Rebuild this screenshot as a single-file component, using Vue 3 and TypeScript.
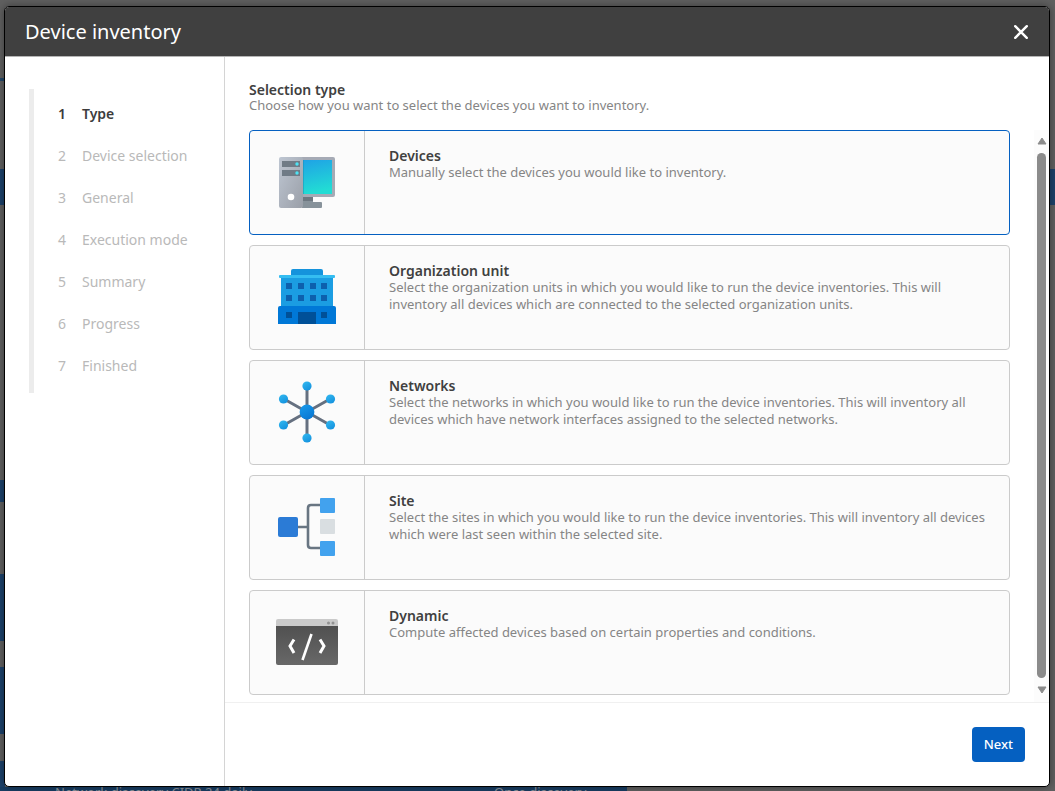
<script setup lang="ts">
import { ref } from 'vue'

interface SelectionType {
  id: string
  title: string
  text: string
}

const steps: string[] = ['Type', 'Device selection', 'General', 'Execution mode', 'Summary', 'Progress', 'Finished']
const current = ref(0)
const selected = ref('devices')

const types: SelectionType[] = [
  { id: 'devices', title: 'Devices', text: 'Manually select the devices you would like to inventory.' },
  {
    id: 'unit',
    title: 'Organization unit',
    text: 'Select the organization units in which you would like to run the device inventories. This will inventory all devices which are connected to the selected organization units.',
  },
  {
    id: 'networks',
    title: 'Networks',
    text: 'Select the networks in which you would like to run the device inventories. This will inventory all devices which have network interfaces assigned to the selected networks.',
  },
  {
    id: 'site',
    title: 'Site',
    text: 'Select the sites in which you would like to run the device inventories. This will inventory all devices which were last seen within the selected site.',
  },
  { id: 'dynamic', title: 'Dynamic', text: 'Compute affected devices based on certain properties and conditions.' },
]
</script>

<template>
  <div class="page">
    <div class="behind" aria-hidden="true">
      <div class="edge left"></div>
      <div class="edge right"></div>
      <div class="jobs">
        <span class="job first">Network discovery CIDR 24 daily</span>
        <span class="job">Once discovery</span>
      </div>
    </div>

    <section class="dialog" role="dialog" aria-labelledby="dialog-title">
      <header class="head">
        <h1 id="dialog-title">Device inventory</h1>
        <button class="close" type="button" aria-label="Close">
          <svg width="16" height="16" viewBox="0 0 16 16">
            <path d="M2.2 2.2 13.8 13.8M13.8 2.2 2.2 13.8" stroke="#fff" stroke-width="2.4" stroke-linecap="round" />
          </svg>
        </button>
      </header>

      <div class="body">
        <nav class="side" aria-label="Steps">
          <ol class="steps">
            <li v-for="(step, i) in steps" :key="step" :class="{ active: i === current }">
              <span class="num">{{ i + 1 }}</span>
              <span>{{ step }}</span>
            </li>
          </ol>
        </nav>

        <main class="main">
          <div class="intro">
            <h2>Selection type</h2>
            <p>Choose how you want to select the devices you want to inventory.</p>
          </div>

          <div class="scroller">
            <div class="cards" role="radiogroup" aria-label="Selection type">
              <label v-for="t in types" :key="t.id" class="card" :class="{ chosen: selected === t.id }">
                <input v-model="selected" class="radio" type="radio" name="selection-type" :value="t.id" />
                <span class="picture">
                  <svg v-if="t.id === 'devices'" width="64" height="64" viewBox="0 0 64 64">
                    <defs>
                      <linearGradient id="screen" x1="0" y1="0" x2="0.2" y2="1">
                        <stop offset="0" stop-color="#1fa2e6" />
                        <stop offset="1" stop-color="#22dcd4" />
                      </linearGradient>
                      <linearGradient id="tower" x1="0" y1="0" x2="1" y2="1">
                        <stop offset="0" stop-color="#bec6d2" />
                        <stop offset="1" stop-color="#9a9fa8" />
                      </linearGradient>
                    </defs>
                    <rect x="25" y="6" width="35" height="40" rx="2" fill="#a5aab5" />
                    <rect x="27" y="9" width="30" height="34" fill="url(#screen)" />
                    <path d="M27 46h11v5h8q1 0 1 1v4q0 1-1 1H27z" fill="#87929a" />
                    <path d="M27 46h11v4H27z" fill="#6d7780" />
                    <rect x="27" y="9" width="2" height="34" fill="#178eb0" opacity=".45" />
                    <rect x="4" y="6" width="24" height="51" rx="2" fill="url(#tower)" />
                    <rect x="7" y="10" width="18" height="6" fill="#707b86" />
                    <rect x="7" y="19" width="18" height="6" fill="#707b86" />
                    <circle cx="22" cy="13" r="1.7" fill="#4de3f4" />
                    <circle cx="22" cy="22" r="1.7" fill="#4de3f4" />
                    <circle cx="16" cy="46" r="3.3" fill="#fff" />
                  </svg>
                  <svg v-else-if="t.id === 'unit'" width="64" height="64" viewBox="0 0 64 64">
                    <path d="M16 10V5q0-2 2-2h28q2 0 2 2v5z" fill="#1593dc" />
                    <rect x="6" y="9" width="52" height="31" fill="#1b9de2" />
                    <rect x="4" y="9" width="56" height="3" rx="1" fill="#35bdf1" />
                    <path d="M3 58V42q0-2 2-2h54q2 0 2 2v16z" fill="#0078d7" />
                    <g fill="#0d60ad">
                      <path d="M11 17h6v6h-6zM23 17h6v6h-6zM35 17h6v6h-6zM46 17h6v6h-6z" />
                      <path d="M11 29h6v6h-6zM23 29h6v6h-6zM35 29h6v6h-6zM46 29h6v6h-6z" />
                    </g>
                    <path d="M11 46h6v6h-6zM23 46h18v12H23zM46 46h6v6h-6z" fill="#005098" />
                  </svg>
                  <svg v-else-if="t.id === 'networks'" width="64" height="64" viewBox="0 1 64 64">
                    <defs>
                      <linearGradient id="node" x1="0" y1="0" x2="0.6" y2="1">
                        <stop offset="0" stop-color="#34baf0" />
                        <stop offset="1" stop-color="#1593df" />
                      </linearGradient>
                      <linearGradient id="hub" x1="0" y1="0" x2="0.6" y2="1">
                        <stop offset="0" stop-color="#199cec" />
                        <stop offset="1" stop-color="#0878d4" />
                      </linearGradient>
                    </defs>
                    <path d="M32 6v52M9 19l46 26M55 19 9 45" stroke="#657080" stroke-width="3" />
                    <g fill="url(#node)">
                      <circle cx="32" cy="6" r="4.6" />
                      <circle cx="32" cy="58" r="4.6" />
                      <circle cx="8.5" cy="19" r="4.6" />
                      <circle cx="55.5" cy="19" r="4.6" />
                      <circle cx="8.5" cy="45" r="4.6" />
                      <circle cx="55.5" cy="45" r="4.6" />
                    </g>
                    <circle cx="32" cy="32" r="7.4" fill="url(#hub)" />
                  </svg>
                  <svg v-else-if="t.id === 'site'" width="64" height="64" viewBox="0 1 64 64">
                    <path d="M22 32h11M46 10H36q-3 0-3 3v37q0 3 3 3h10" fill="none" stroke="#687582" stroke-width="2.6" />
                    <rect x="3" y="22" width="20" height="20" rx="2" fill="#2b7bd6" />
                    <rect x="45" y="3" width="15" height="15" rx="1" fill="#42a2ee" />
                    <rect x="45" y="24" width="15" height="15" rx="1" fill="#d9dee1" />
                    <rect x="45" y="46" width="15" height="15" rx="1" fill="#42a2ee" />
                  </svg>
                  <svg v-else width="64" height="64" viewBox="0 2 64 64">
                    <defs>
                      <linearGradient id="window" x1="0" y1="0" x2="0" y2="1">
                        <stop offset="0" stop-color="#505050" />
                        <stop offset="1" stop-color="#686868" />
                      </linearGradient>
                    </defs>
                    <path d="M1 16h62v38q0 2-2 2H3q-2 0-2-2z" fill="url(#window)" />
                    <path d="M1 17v-5q0-2 2-2h58q2 0 2 2v5z" fill="#cacaca" />
                    <circle cx="53.5" cy="14" r="1.5" fill="#929292" />
                    <circle cx="58" cy="14" r="1.5" fill="#929292" />
                    <path d="M19 30.500 15 37l4 7M45 30.500 49 37l-4 7" fill="none" stroke="#fff" stroke-width="3" />
                    <path d="M36.500 25 27.500 51" stroke="#fff" stroke-width="2.600" />
                  </svg>
                </span>
                <span class="copy">
                  <span class="name">{{ t.title }}</span>
                  <span class="desc">{{ t.text }}</span>
                </span>
              </label>
            </div>
            <div class="scrollbar" aria-hidden="true">
              <svg width="10" height="8" viewBox="0 0 10 8"><path d="M5 1 9 7H1z" fill="#8b8b8b" stroke="#8b8b8b" stroke-linejoin="round" /></svg>
              <div class="thumb"></div>
              <svg width="10" height="8" viewBox="0 0 10 8"><path d="M5 7 9 1H1z" fill="#8b8b8b" stroke="#8b8b8b" stroke-linejoin="round" /></svg>
            </div>
          </div>

          <footer class="foot">
            <button class="next" type="button">Next</button>
          </footer>
        </main>
      </div>
    </section>
  </div>
</template>

<style>
body {
  margin: 0;
}
</style>

<style scoped>
* {
  box-sizing: border-box;
}
.page {
  position: relative;
  display: flex;
  min-height: 100vh;
  padding: 6px 5px 4px 4px;
  overflow: hidden;
  background: #606060;
  font-family: 'Noto Sans', sans-serif;
  font-size: 13px;
  line-height: 17px;
  color: #858585;
}
.behind {
  position: absolute;
  inset: 0;
}
.edge {
  position: absolute;
  top: 0;
  bottom: 0;
  width: 5px;
}
.left {
  left: 0;
  background: linear-gradient(
    transparent 78px, #23486b 78px 81px, transparent 81px 169px,
    #1d426b 169px 205px, transparent 205px 480px,
    #1d426b 480px 502px, transparent 502px 574px,
    #1d426b 574px 641px, transparent 641px 667px,
    #1d426b 667px 734px, transparent 734px 761px,
    #1d426b 761px
  );
}
.right {
  right: 0;
  background: linear-gradient(transparent 169px, #1d426b 169px 205px, transparent 205px);
}
.jobs {
  position: absolute;
  left: 0;
  bottom: 0;
  display: flex;
  width: 627px;
  height: 4px;
  overflow: hidden;
  background: #183e64;
  color: #8d949c;
  line-height: 10px;
  white-space: nowrap;
}
.job {
  flex: none;
}
.first {
  width: 494px;
  padding-left: 55px;
}
.dialog {
  position: relative;
  display: flex;
  flex: 1;
  flex-direction: column;
  overflow: hidden;
  border: 1px solid #000;
  border-radius: 5px;
  background: #fff;
  box-shadow: 0 0 8px rgba(0, 0, 0, 0.4);
}
.head {
  display: flex;
  align-items: center;
  justify-content: space-between;
  height: 50px;
  padding: 0 20px;
  border-bottom: 1px solid #b5b5b5;
  background: #404040;
}
h1 {
  margin: 0;
  color: #fff;
  font-size: 20px;
  font-weight: 400;
  line-height: 28px;
}
.close {
  display: flex;
  padding: 0;
  border: 0;
  background: none;
}
.body {
  display: flex;
  flex: 1;
}
.side {
  flex: none;
  width: 220px;
  padding: 32px 24px;
  border-right: 1px solid #d4d4d4;
}
.steps {
  margin: 0;
  padding: 3px 0 7px 24px;
  border-left: 5px solid #ececec;
  list-style: none;
  color: #b9b9b9;
  font-size: 14px;
}
.steps li {
  display: flex;
  align-items: center;
  height: 42px;
}
.steps .active {
  color: #3c3c3c;
  font-weight: 600;
}
.num {
  width: 24px;
}
.main {
  display: flex;
  flex: 1;
  flex-direction: column;
  min-width: 0;
}
.intro {
  padding: 25px 24px 17px;
}
h2,
p {
  margin: 0;
}
h2,
.name {
  color: #404040;
  font-size: 14px;
  font-weight: 600;
  line-height: 16px;
}
p {
  line-height: 15px;
}
.scroller {
  display: flex;
  gap: 24px;
}
.cards {
  display: flex;
  flex: 1;
  flex-direction: column;
  gap: 10px;
  padding: 0 0 7px 24px;
}
.card {
  position: relative;
  display: flex;
  min-height: 105px;
  overflow: hidden;
  border: 1px solid #cbcbcb;
  border-radius: 4px;
  background: #fbfbfb;
}
.chosen {
  border-color: #0560c1;
}
.radio {
  position: absolute;
  opacity: 0;
}
.picture {
  display: flex;
  flex: none;
  align-items: center;
  justify-content: center;
  width: 115px;
  border-right: 1px solid #cbcbcb;
}
.copy {
  display: flex;
  flex-direction: column;
  padding: 17px 24px;
}
.scrollbar {
  display: flex;
  flex: none;
  flex-direction: column;
  align-items: center;
  gap: 8px;
  width: 15px;
  padding: 7px 0 8px;
  background: #fcfcfc;
}
.thumb {
  flex: 1;
  width: 9px;
  border-radius: 5px;
  background: #8b8b8b;
}
.foot {
  display: flex;
  flex: 1;
  align-items: center;
  justify-content: flex-end;
  padding: 0 24px;
  border-top: 1px solid #f0f0f0;
}
.next {
  height: 35px;
  padding: 0 12px 1px;
  border: 0;
  border-radius: 4px;
  background: #0560c1;
  color: #fff;
  font: 500 13px 'Noto Sans', sans-serif;
}
</style>
